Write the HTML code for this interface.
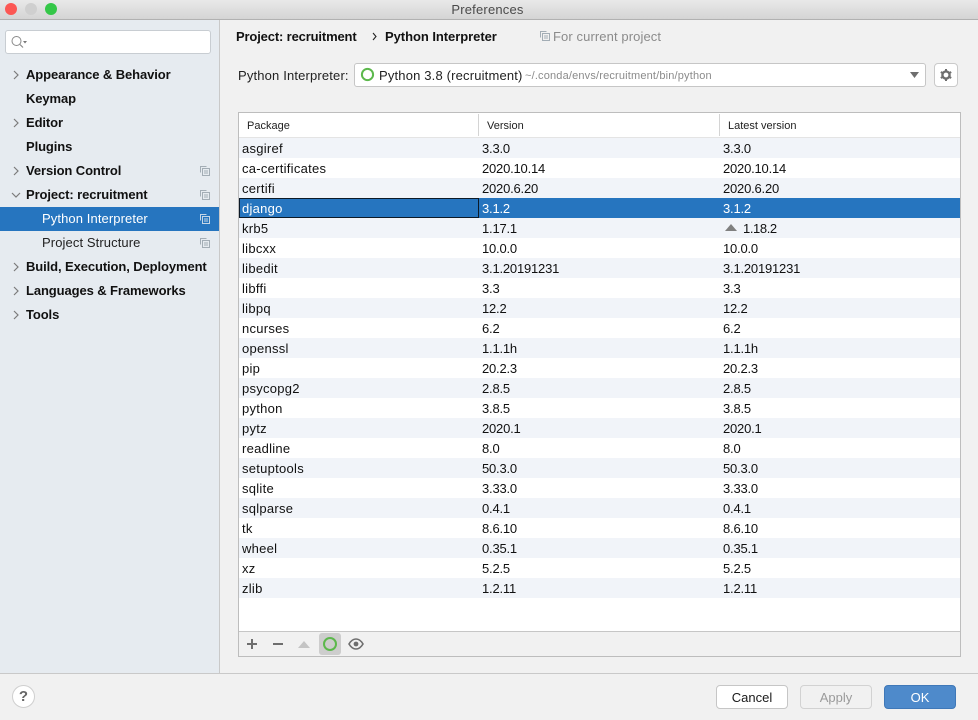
<!DOCTYPE html>
<html><head><meta charset="utf-8">
<style>
html,body{margin:0;padding:0;width:978px;height:719px;overflow:hidden;background:#f1f1f1;font-family:"Liberation Sans",sans-serif;font-size:13px;color:#1a1a1a}
.a{position:absolute;white-space:nowrap}
#t{left:0;top:0;width:975px;height:19px;background:linear-gradient(#e9e9e9,#d4d4d4);border-bottom:1px solid #b1b1b1;padding-right:3px;text-align:center;line-height:19px;color:#4a4a4a;font-size:13px;letter-spacing:.2px}
.dot{width:12px;height:12px;border-radius:50%;top:3px}
#side{left:0;top:20px;width:219px;height:653px;background:#e6ebf0;border-right:1px solid #c9c9c9}
.n{left:26px;font-weight:bold;line-height:24px;height:24px;color:#111;margin-top:1px;letter-spacing:-.1px}
.s{left:42px;line-height:24px;height:24px;color:#222;margin-top:1px;letter-spacing:.1px}
.ar{left:11px;width:10px;height:10px}
.cp{left:200px;width:10px;height:10px}
.r{left:239px;width:721px;height:20px}
.c{line-height:20px;height:20px;color:#111;margin-top:1px;letter-spacing:-.2px}
.c[style*="left:242"]{letter-spacing:.27px}
.h{line-height:24px;top:113px;font-size:11px;color:#222;margin-top:1px}
.btn{top:685px;width:70px;height:22px;border:1px solid #c6c6c6;border-radius:4px;text-align:center;line-height:23px;background:#fff}
</style></head><body>
<div class="a" id="t">Preferences</div>
<div class="a dot" style="left:5px;background:#fc5753;"></div>
<div class="a dot" style="left:25px;background:#cfcfcf;border:0"></div>
<div class="a dot" style="left:45px;background:#34c748"></div>

<div class="a" id="side"></div>
<div class="a" style="left:5px;top:30px;width:204px;height:22px;background:#fff;border:1px solid #c8cdd2;border-radius:3px"></div>
<svg class="a" style="left:10px;top:34px" width="18" height="16"><circle cx="6.5" cy="7" r="4.5" fill="none" stroke="#8a8a8a" stroke-width="1"/><path d="M10 10.5l3 3" stroke="#8a8a8a" stroke-width="1.2"/><path d="M13 7h4l-2 2.5z" fill="#777"/></svg>

<div class="a n" style="top:62px">Appearance &amp; Behavior</div>
<div class="a n" style="top:86px">Keymap</div>
<div class="a n" style="top:110px">Editor</div>
<div class="a n" style="top:134px">Plugins</div>
<div class="a n" style="top:158px">Version Control</div>
<div class="a n" style="top:182px">Project: recruitment</div>
<div class="a" style="left:0;top:207px;width:219px;height:24px;background:#2675bf"></div>
<div class="a s" style="top:206px;color:#fff">Python Interpreter</div>
<div class="a s" style="top:230px">Project Structure</div>
<div class="a n" style="top:254px">Build, Execution, Deployment</div>
<div class="a n" style="top:278px">Languages &amp; Frameworks</div>
<div class="a n" style="top:302px">Tools</div>

<svg class="a ar" style="top:70px"><path d="M3 1l4 4-4 4" fill="none" stroke="#7b7b7b" stroke-width="1.2"/></svg>
<svg class="a ar" style="top:118px"><path d="M3 1l4 4-4 4" fill="none" stroke="#7b7b7b" stroke-width="1.2"/></svg>
<svg class="a ar" style="top:166px"><path d="M3 1l4 4-4 4" fill="none" stroke="#7b7b7b" stroke-width="1.2"/></svg>
<svg class="a ar" style="top:190px"><path d="M1 3l4 4 4-4" fill="none" stroke="#7b7b7b" stroke-width="1.2"/></svg>
<svg class="a ar" style="top:262px"><path d="M3 1l4 4-4 4" fill="none" stroke="#7b7b7b" stroke-width="1.2"/></svg>
<svg class="a ar" style="top:286px"><path d="M3 1l4 4-4 4" fill="none" stroke="#7b7b7b" stroke-width="1.2"/></svg>
<svg class="a ar" style="top:310px"><path d="M3 1l4 4-4 4" fill="none" stroke="#7b7b7b" stroke-width="1.2"/></svg>

<svg class="a cp" style="top:166px"><path d="M.5 6.5v-6h6M2.5 2.5h7v7h-7zM4 5h4M4 7h4" fill="none" stroke="#a3adb5"/></svg>
<svg class="a cp" style="top:190px"><path d="M.5 6.5v-6h6M2.5 2.5h7v7h-7zM4 5h4M4 7h4" fill="none" stroke="#a3adb5"/></svg>
<svg class="a cp" style="top:214px"><path d="M.5 6.5v-6h6M2.5 2.5h7v7h-7zM4 5h4M4 7h4" fill="none" stroke="#c6d6e6"/></svg>
<svg class="a cp" style="top:238px"><path d="M.5 6.5v-6h6M2.5 2.5h7v7h-7zM4 5h4M4 7h4" fill="none" stroke="#a3adb5"/></svg>

<div class="a" style="left:236px;top:29px;font-weight:bold;color:#111;letter-spacing:-.15px">Project: recruitment</div>
<svg class="a" style="left:371px;top:32px" width="8" height="9"><path d="M2 1l3 3.5-3 3.500" fill="none" stroke="#222" stroke-width="1.1"/></svg>
<div class="a" style="left:385px;top:29px;font-weight:bold;color:#111;letter-spacing:-.05px">Python Interpreter</div>
<svg class="a" style="left:540px;top:31px" width="10" height="10"><path d="M.5 6.5v-6h6M2.5 2.5h7v7h-7zM4 5h4M4 7h4" fill="none" stroke="#a3adb5"/></svg>
<div class="a" style="left:553px;top:29px;color:#8b8b8b;letter-spacing:.1px">For current project</div>

<div class="a" style="left:238px;top:68px;color:#222;letter-spacing:.16px">Python Interpreter:</div>
<div class="a" style="left:354px;top:63px;width:570px;height:22px;background:#fff;border:1px solid #c6c6c6;border-radius:3px"></div>
<svg class="a" style="left:360px;top:67px" width="15" height="15"><circle cx="7.500" cy="7.500" r="5.600" fill="none" stroke="#5cb84c" stroke-width="2"/></svg>
<div class="a" style="left:379px;top:68px;color:#222;letter-spacing:.17px">Python 3.8 (recruitment)</div>
<div class="a" style="left:525px;top:70px;font-size:11px;color:#8b8b8b;letter-spacing:.17px">~/.conda/envs/recruitment/bin/python</div>
<svg class="a" style="left:909px;top:71px" width="12" height="8"><path d="M1 1h9l-4.500 6z" fill="#6e6e6e"/></svg>
<div class="a" style="left:934px;top:63px;width:22px;height:22px;background:#fff;border:1px solid #cacaca;border-radius:4px"></div>
<svg class="a" style="left:939px;top:68px" width="14" height="14" viewBox="0 0 14 14"><circle cx="7" cy="7" r="3.600" fill="none" stroke="#6e6e6e" stroke-width="2.400"/><path d="M7 1v12M1.800 4l10.400 6M1.800 10l10.400-6" stroke="#6e6e6e" stroke-width="2" stroke-dasharray="2.200 7.600"/></svg>

<div class="a" style="left:238px;top:112px;width:721px;height:543px;background:#fff;border:1px solid #bdbdbd"></div>
<div class="a" style="left:239px;top:137px;width:721px;height:1px;background:#e4e4e4"></div>
<div class="a" style="left:478px;top:114px;width:1px;height:22px;background:#d4d4d4"></div>
<div class="a" style="left:719px;top:114px;width:1px;height:22px;background:#d4d4d4"></div>
<div class="a h" style="left:247px">Package</div>
<div class="a h" style="left:487px">Version</div>
<div class="a h" style="left:728px">Latest version</div>

<div class="a r" style="top:138px;background:#f1f4f9"></div>
<div class="a r" style="top:178px;background:#f1f4f9"></div>
<div class="a r" style="top:198px;background:#2675bf"></div>
<div class="a" style="left:239px;top:198px;width:238px;height:18px;border:1px solid #0c1a28"></div>
<div class="a r" style="top:218px;background:#f1f4f9"></div>
<div class="a r" style="top:258px;background:#f1f4f9"></div>
<div class="a r" style="top:298px;background:#f1f4f9"></div>
<div class="a r" style="top:338px;background:#f1f4f9"></div>
<div class="a r" style="top:378px;background:#f1f4f9"></div>
<div class="a r" style="top:418px;background:#f1f4f9"></div>
<div class="a r" style="top:458px;background:#f1f4f9"></div>
<div class="a r" style="top:498px;background:#f1f4f9"></div>
<div class="a r" style="top:538px;background:#f1f4f9"></div>
<div class="a r" style="top:578px;background:#f1f4f9"></div>

<div class="a c" style="left:242px;top:138px">asgiref</div><div class="a c" style="left:482px;top:138px">3.3.0</div><div class="a c" style="left:723px;top:138px">3.3.0</div>
<div class="a c" style="left:242px;top:158px">ca-certificates</div><div class="a c" style="left:482px;top:158px">2020.10.14</div><div class="a c" style="left:723px;top:158px">2020.10.14</div>
<div class="a c" style="left:242px;top:178px">certifi</div><div class="a c" style="left:482px;top:178px">2020.6.20</div><div class="a c" style="left:723px;top:178px">2020.6.20</div>
<div class="a c" style="left:242px;top:198px;color:#fff">django</div><div class="a c" style="left:482px;top:198px;color:#fff">3.1.2</div><div class="a c" style="left:723px;top:198px;color:#fff">3.1.2</div>
<div class="a c" style="left:242px;top:218px">krb5</div><div class="a c" style="left:482px;top:218px">1.17.1</div><svg class="a" style="left:725px;top:224px" width="12" height="7"><path d="M0 7L6 0l6 7z" fill="#808080"/></svg><div class="a c" style="left:743px;top:218px;letter-spacing:-.4px">1.18.2</div>
<div class="a c" style="left:242px;top:238px">libcxx</div><div class="a c" style="left:482px;top:238px">10.0.0</div><div class="a c" style="left:723px;top:238px">10.0.0</div>
<div class="a c" style="left:242px;top:258px">libedit</div><div class="a c" style="left:482px;top:258px">3.1.20191231</div><div class="a c" style="left:723px;top:258px">3.1.20191231</div>
<div class="a c" style="left:242px;top:278px">libffi</div><div class="a c" style="left:482px;top:278px">3.3</div><div class="a c" style="left:723px;top:278px">3.3</div>
<div class="a c" style="left:242px;top:298px">libpq</div><div class="a c" style="left:482px;top:298px">12.2</div><div class="a c" style="left:723px;top:298px">12.2</div>
<div class="a c" style="left:242px;top:318px">ncurses</div><div class="a c" style="left:482px;top:318px">6.2</div><div class="a c" style="left:723px;top:318px">6.2</div>
<div class="a c" style="left:242px;top:338px">openssl</div><div class="a c" style="left:482px;top:338px">1.1.1h</div><div class="a c" style="left:723px;top:338px">1.1.1h</div>
<div class="a c" style="left:242px;top:358px">pip</div><div class="a c" style="left:482px;top:358px">20.2.3</div><div class="a c" style="left:723px;top:358px">20.2.3</div>
<div class="a c" style="left:242px;top:378px">psycopg2</div><div class="a c" style="left:482px;top:378px">2.8.5</div><div class="a c" style="left:723px;top:378px">2.8.5</div>
<div class="a c" style="left:242px;top:398px">python</div><div class="a c" style="left:482px;top:398px">3.8.5</div><div class="a c" style="left:723px;top:398px">3.8.5</div>
<div class="a c" style="left:242px;top:418px">pytz</div><div class="a c" style="left:482px;top:418px">2020.1</div><div class="a c" style="left:723px;top:418px">2020.1</div>
<div class="a c" style="left:242px;top:438px">readline</div><div class="a c" style="left:482px;top:438px">8.0</div><div class="a c" style="left:723px;top:438px">8.0</div>
<div class="a c" style="left:242px;top:458px">setuptools</div><div class="a c" style="left:482px;top:458px">50.3.0</div><div class="a c" style="left:723px;top:458px">50.3.0</div>
<div class="a c" style="left:242px;top:478px">sqlite</div><div class="a c" style="left:482px;top:478px">3.33.0</div><div class="a c" style="left:723px;top:478px">3.33.0</div>
<div class="a c" style="left:242px;top:498px">sqlparse</div><div class="a c" style="left:482px;top:498px">0.4.1</div><div class="a c" style="left:723px;top:498px">0.4.1</div>
<div class="a c" style="left:242px;top:518px">tk</div><div class="a c" style="left:482px;top:518px">8.6.10</div><div class="a c" style="left:723px;top:518px">8.6.10</div>
<div class="a c" style="left:242px;top:538px">wheel</div><div class="a c" style="left:482px;top:538px">0.35.1</div><div class="a c" style="left:723px;top:538px">0.35.1</div>
<div class="a c" style="left:242px;top:558px">xz</div><div class="a c" style="left:482px;top:558px">5.2.5</div><div class="a c" style="left:723px;top:558px">5.2.5</div>
<div class="a c" style="left:242px;top:578px">zlib</div><div class="a c" style="left:482px;top:578px">1.2.11</div><div class="a c" style="left:723px;top:578px">1.2.11</div>

<div class="a" style="left:239px;top:631px;width:721px;height:24px;background:#f1f1f1;border-top:1px solid #c6c6c6"></div>
<svg class="a" style="left:246px;top:638px" width="12" height="12"><path d="M1 6h10M6 1v10" stroke="#6e6e6e" stroke-width="2"/></svg>
<svg class="a" style="left:272px;top:638px" width="12" height="12"><path d="M1 6h10" stroke="#6e6e6e" stroke-width="2"/></svg>
<svg class="a" style="left:298px;top:641px" width="12" height="7"><path d="M0 7L6 0l6 7z" fill="#c4c4c4"/></svg>
<div class="a" style="left:319px;top:633px;width:22px;height:22px;background:#cdcdcd;border-radius:3px"></div>
<svg class="a" style="left:322px;top:636px" width="16" height="16"><circle cx="8" cy="8" r="6" fill="none" stroke="#5cb84c" stroke-width="2"/></svg>
<svg class="a" style="left:348px;top:638px" width="16" height="12"><path d="M1 6c2-3.400 4.200-5 7-5s5 1.600 7 5c-2 3.400-4.200 5-7 5s-5-1.600-7-5z" fill="none" stroke="#6e6e6e" stroke-width="1.600"/><circle cx="8" cy="6" r="2.400" fill="#6e6e6e"/></svg>

<div class="a" style="left:0;top:673px;width:978px;height:46px;background:#f1f1f1;border-top:1px solid #c9c9c9"></div>
<div class="a" style="left:12px;top:685px;width:21px;height:21px;border:1px solid #cfcfcf;border-radius:50%;background:#fff;text-align:center;line-height:22px;font-weight:bold;font-size:15px;color:#666">?</div>
<div class="a btn" style="left:716px">Cancel</div>
<div class="a btn" style="left:800px;background:#f1f1f1;color:#9a9a9a;border-color:#d2d2d2">Apply</div>
<div class="a btn" style="left:884px;background:#4e8acb;color:#fff;border-color:#3f78b8">OK</div>
</body></html>
